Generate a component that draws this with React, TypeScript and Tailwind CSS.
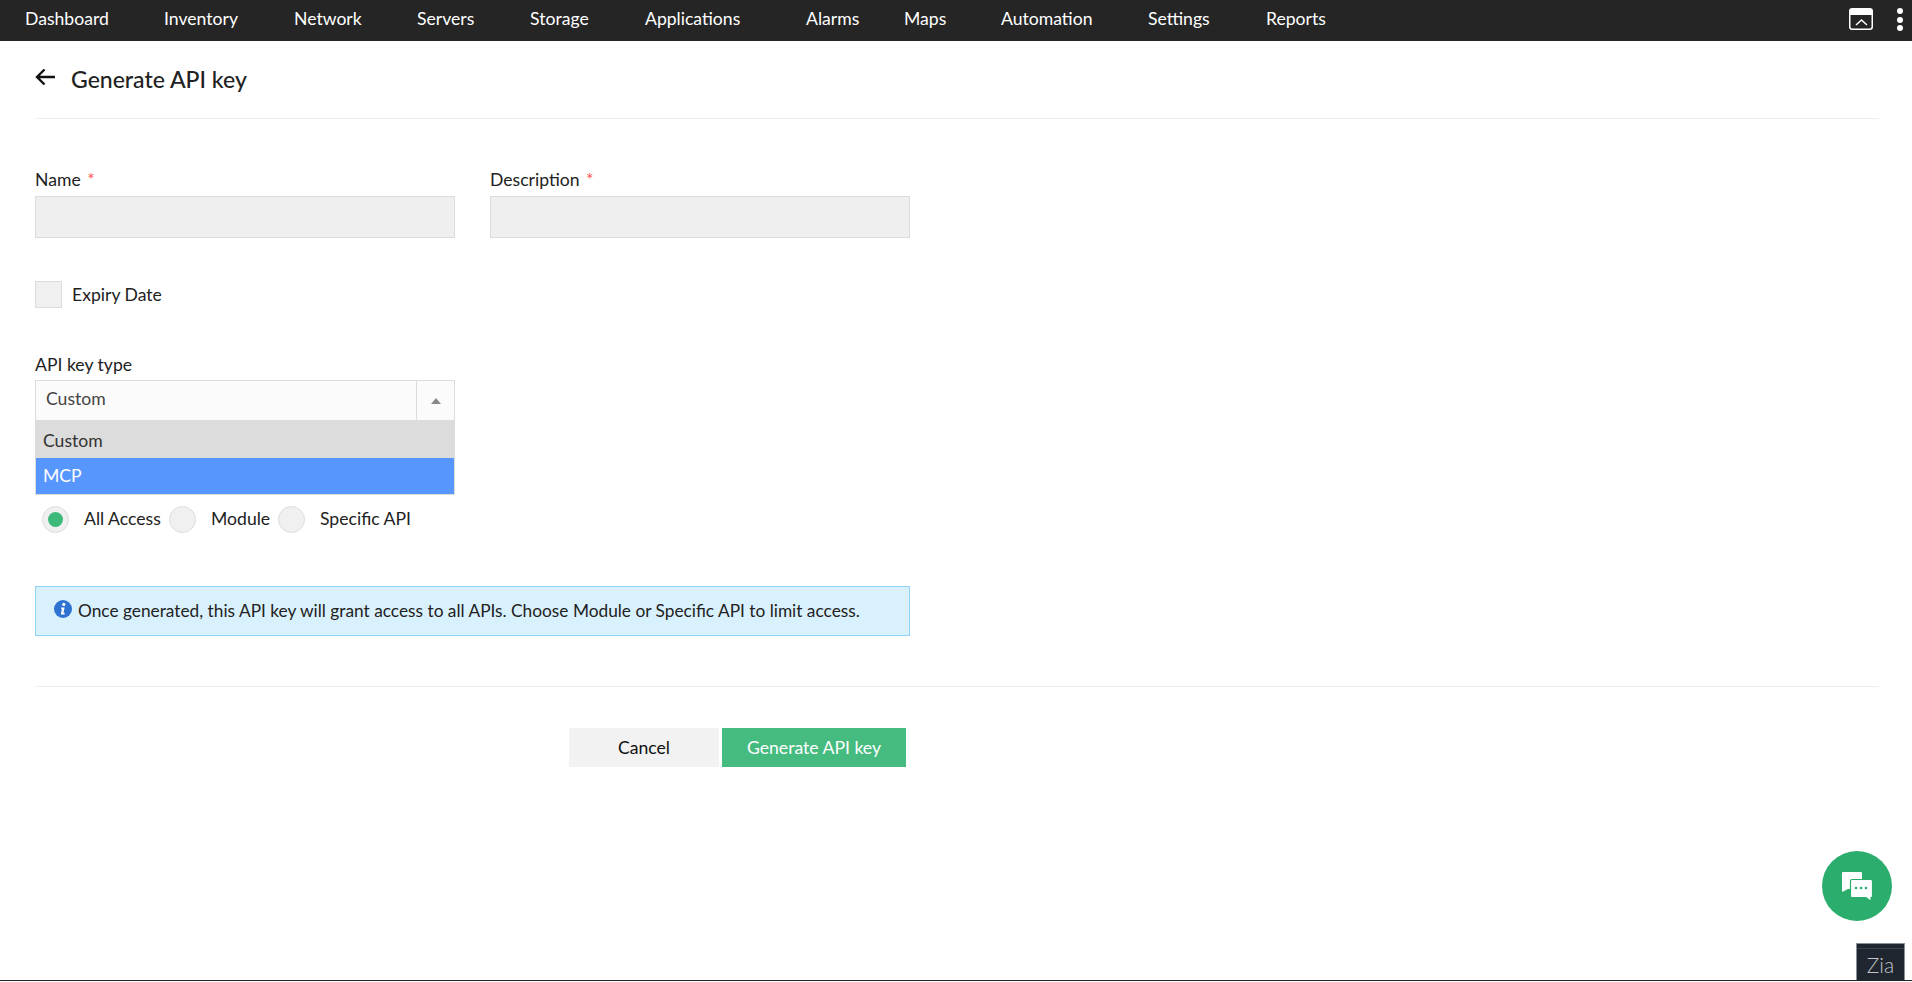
const navItems = [
  { label: "Dashboard", width: "w-[139px]" },
  { label: "Inventory", width: "w-[130px]" },
  { label: "Network", width: "w-[123px]" },
  { label: "Servers", width: "w-[113px]" },
  { label: "Storage", width: "w-[115px]" },
  { label: "Applications", width: "w-[161px]" },
  { label: "Alarms", width: "w-[98px]" },
  { label: "Maps", width: "w-[97px]" },
  { label: "Automation", width: "w-[147px]" },
  { label: "Settings", width: "w-[118px]" },
  { label: "Reports", width: "w-[90px]" },
];

const Radio = ({ label, checked, textWidth }: { label: string; checked?: boolean; textWidth: string }) => (
  <div className="flex items-center">
    <span className="flex h-[27px] w-[27px] items-center justify-center rounded-full border border-[#dcdcdc] bg-[#f0f0f0]">
      {checked && <span className="h-[15px] w-[15px] rounded-full bg-[#3dba7a]" />}
    </span>
    <span className={`ml-[15px] pb-[1px] text-[17.6px] leading-[22px] text-[#222] ${textWidth}`}>{label}</span>
  </div>
);

export default function App() {
  return (
    <div className="relative flex h-[981px] w-full flex-col overflow-hidden border-b border-[#222] bg-white font-['Lato',sans-serif]">
      <nav className="flex h-[41px] shrink-0 items-center justify-between bg-[#252525] pl-[25px] pr-[9px]">
        <div className="flex pb-[2px]">
          {navItems.map((item) => (
            <span key={item.label} className={`text-[17.6px] text-white ${item.width}`}>
              {item.label}
            </span>
          ))}
        </div>
        <div className="flex items-center gap-[24px]">
          <svg width="24" height="22" viewBox="0 0 24 22" fill="none" className="mb-[3px]">
            <rect x="0.75" y="0.75" width="22.5" height="20.5" rx="2.5" stroke="#fff" strokeWidth="1.5" />
            <path d="M1 7V3a2 2 0 0 1 2-2h18a2 2 0 0 1 2 2v4z" fill="#fff" />
            <path d="M7 17l5.5-5 5.5 5" stroke="#fff" strokeWidth="1.5" />
          </svg>
          <div className="mb-[2px] flex flex-col gap-[2.5px]">
            <span className="h-[6px] w-[6px] rounded-full bg-white" />
            <span className="h-[6px] w-[6px] rounded-full bg-white" />
            <span className="h-[6px] w-[6px] rounded-full bg-white" />
          </div>
        </div>
      </nav>

      <main className="flex flex-1 flex-col pl-[35px] pr-[33px]">
        <div className="flex h-[78px] items-center border-b border-[#eeeeee] pb-[1px]">
          <svg width="20" height="18" viewBox="0 0 20 18" fill="none" className="mb-[4px]">
            <path d="M20 9H2M9.5 1.5L2 9l7.5 7.5" stroke="#111" strokeWidth="2.4" />
          </svg>
          <h1 className="ml-[16px] text-[23px] font-medium text-[#222]">Generate API key</h1>
        </div>

        <div className="mt-[51px] flex gap-[35px]">
          <div className="w-[420px]">
            <label className="block h-[26px] text-[17.6px] leading-[20px] text-[#222]">
              Name <span className="ml-[2px] text-[#f55]">*</span>
            </label>
            <div className="h-[42px] border border-[#dcdcdc] bg-[#efefef]" />
          </div>
          <div className="w-[420px]">
            <label className="block h-[26px] text-[17.6px] leading-[20px] text-[#222]">
              Description <span className="ml-[2px] text-[#f55]">*</span>
            </label>
            <div className="h-[42px] border border-[#dcdcdc] bg-[#efefef]" />
          </div>
        </div>

        <div className="mt-[43px] flex items-center">
          <span className="h-[27px] w-[27px] border border-[#dcdcdc] bg-[#f0f0f0]" />
          <span className="ml-[10px] text-[17.6px] leading-[22px] text-[#222]">Expiry Date</span>
        </div>

        <label className="mt-[46px] block h-[26px] text-[17.6px] leading-[22px] text-[#222]">API key type</label>
        <div className="relative w-[420px]">
          <div className="flex h-[41px] border border-[#dcdcdc] bg-[#fbfbfb]">
            <span className="flex-1 pl-[10px] text-[17.6px] leading-[36px] text-[#444]">Custom</span>
            <span className="flex w-[38px] items-center justify-center border-l border-[#dcdcdc]">
              <span className="h-0 w-0 border-x-[5px] border-b-[6px] border-x-transparent border-b-[#888]" />
            </span>
          </div>
          <div className="absolute left-0 top-[41px] z-10 w-full border-x border-b border-[#dcdcdc]">
            <div className="h-[37px] bg-[#dcdcdc] pl-[7px] text-[17.6px] leading-[39px] text-[#333]">Custom</div>
            <div className="h-[36px] bg-[#5797fd] pl-[7px] text-[17.6px] leading-[36px] text-white">MCP</div>
          </div>
        </div>

        <div className="ml-[7px] mt-[85px] flex">
          <Radio label="All Access" checked textWidth="w-[85px]" />
          <Radio label="Module" textWidth="w-[67px]" />
          <Radio label="Specific API" textWidth="w-[100px]" />
        </div>

        <div className="mt-[53px] flex h-[50px] w-[875px] items-center border border-[#8fd4f5] bg-[#d9f1fd] pl-[18px] text-[17.3px] text-[#222]">
          <svg width="18" height="18" viewBox="0 0 18 18" className="mb-[5px] mr-[6px] shrink-0">
            <circle cx="9" cy="9" r="9" fill="#2f73d2" />
            <circle cx="9.8" cy="4.4" r="1.6" fill="#fff" />
            <path d="M7 7.4h3.6l-1.1 5.6h1.2v1.4H6.8l1.1-5.6H7z" fill="#fff" />
          </svg>
          Once generated, this API key will grant access to all APIs. Choose Module or Specific API to limit access.
        </div>

        <div className="mt-[50px] border-t border-[#eeeeee]" />

        <div className="ml-[534px] mt-[41px] flex gap-[3px]">
          <button className="h-[39px] w-[150px] bg-[#f2f2f2] pt-[2px] text-[17.6px] text-[#111]">Cancel</button>
          <button className="h-[39px] w-[184px] bg-[#45bb7f] pt-[2px] text-[17.6px] text-white">Generate API key</button>
        </div>
      </main>

      <div className="absolute left-[1822px] top-[851px] flex h-[70px] w-[70px] items-center justify-center rounded-full bg-[#2bae6d]">
        <svg width="30" height="29" viewBox="0 0 30 29">
          <path d="M1 0h18a1 1 0 0 1 1 1v15a1 1 0 0 1-1 1H6l-6 3V1a1 1 0 0 1 1-1z" fill="#fff" />
          <path
            d="M10 7.5h19a1.5 1.5 0 0 1 1.5 1.5v15a1.5 1.5 0 0 1-1.5 1.5v4l-5-4H10A1.5 1.5 0 0 1 8.5 24V9A1.5 1.5 0 0 1 10 7.5z"
            fill="#fff"
            stroke="#2bae6d"
            strokeWidth="1.2"
          />
          <circle cx="14" cy="16" r="1.3" fill="#2bae6d" />
          <circle cx="19" cy="16" r="1.3" fill="#2bae6d" />
          <circle cx="24" cy="16" r="1.3" fill="#2bae6d" />
        </svg>
      </div>

      <div className="absolute bottom-0 left-[1856px] h-[37px] w-[49px] border-x border-t border-[#8a9097] bg-[#1f2630]">
        <div className="mt-[4px] border-t border-[#3c434c] pt-[5px] text-center text-[21px] font-light leading-[22px] text-[#c2c6cb]">
          Zia
        </div>
      </div>
    </div>
  );
}
